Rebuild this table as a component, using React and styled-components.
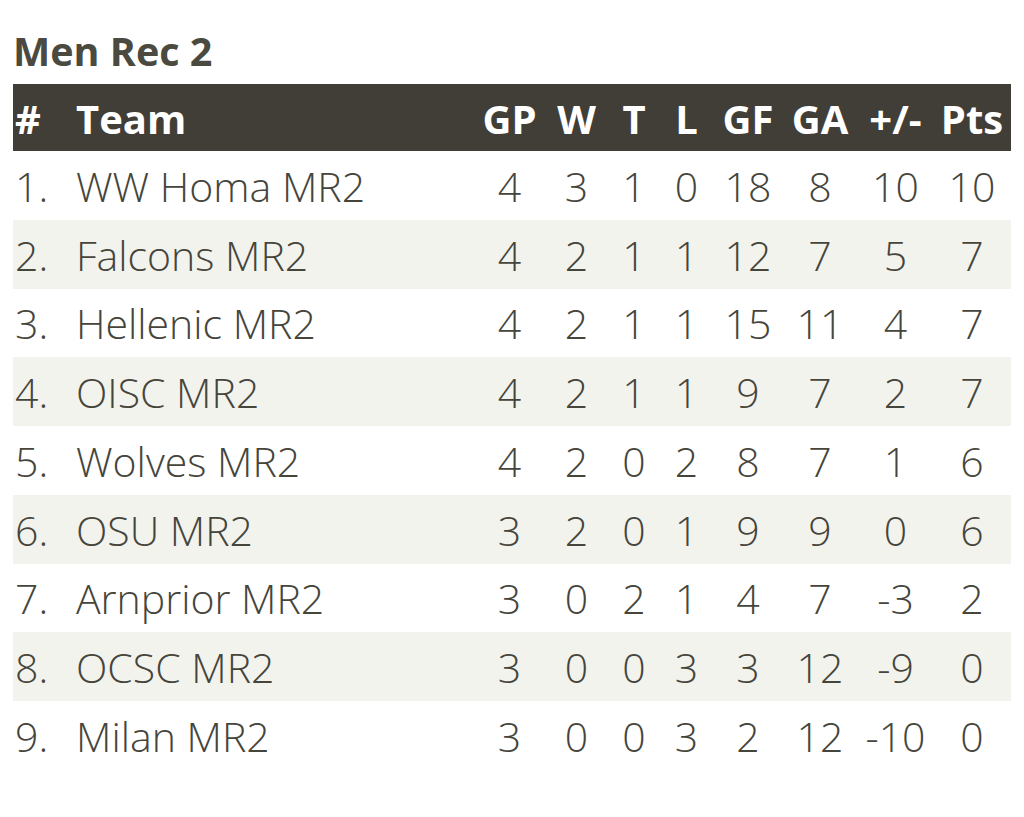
import React from "react";
import styled, { createGlobalStyle } from "styled-components";

const Global = createGlobalStyle`
  html, body { margin: 0; padding: 0; background: #ffffff; }
  body { font-family: "Open Sans", "Noto Sans", sans-serif; color: #4a4a41; }
`;

const Page = styled.div`
  padding: 26px 13px 0 13px;
`;

const Title = styled.h2`
  margin: 0 0 8px 0;
  font-size: 39.5px;
  line-height: 50px;
  font-weight: 700;
  color: #4a4a41;
`;

const COLS = "63px 399px 69px 65px 50px 55px 68px 76px 75px 78px";

const HeadRow = styled.div`
  display: grid;
  grid-template-columns: ${COLS};
  height: 67px;
  align-items: center;
  background: #403e37;
  color: #ffffff;
  font-weight: 700;
  font-size: 40px;
`;

const Row = styled.div`
  display: grid;
  grid-template-columns: ${COLS};
  height: 68.75px;
  align-items: center;
  background: ${(p) => (p.$striped ? "#f3f3ee" : "#ffffff")};
  font-size: 41px;
  font-weight: 350;
  color: #45453c;
`;

const Cell = styled.div`
  text-align: ${(p) => (p.$left ? "left" : "center")};
  padding-left: ${(p) => (p.$rank ? "2px" : "0")};
  white-space: nowrap;
  line-height: 1;
  padding-top: 2px;
`;

const headers = ["GP", "W", "T", "L", "GF", "GA", "+/-", "Pts"];

const data = [
  ["WW Homa MR2", 4, 3, 1, 0, 18, 8, 10, 10],
  ["Falcons MR2", 4, 2, 1, 1, 12, 7, 5, 7],
  ["Hellenic MR2", 4, 2, 1, 1, 15, 11, 4, 7],
  ["OISC MR2", 4, 2, 1, 1, 9, 7, 2, 7],
  ["Wolves MR2", 4, 2, 0, 2, 8, 7, 1, 6],
  ["OSU MR2", 3, 2, 0, 1, 9, 9, 0, 6],
  ["Arnprior MR2", 3, 0, 2, 1, 4, 7, -3, 2],
  ["OCSC MR2", 3, 0, 0, 3, 3, 12, -9, 0],
  ["Milan MR2", 3, 0, 0, 3, 2, 12, -10, 0],
];

export default function App() {
  return (
    <Page>
      <Global />
      <Title>Men Rec 2</Title>
      <HeadRow>
        <Cell $left $rank>#</Cell>
        <Cell $left>Team</Cell>
        {headers.map((h) => (
          <Cell key={h}>{h}</Cell>
        ))}
      </HeadRow>
      {data.map((r, i) => (
        <Row key={r[0]} $striped={i % 2 === 1}>
          <Cell $left $rank>{i + 1}.</Cell>
          <Cell $left>{r[0]}</Cell>
          {r.slice(1).map((v, j) => (
            <Cell key={j}>{v}</Cell>
          ))}
        </Row>
      ))}
    </Page>
  );
}
